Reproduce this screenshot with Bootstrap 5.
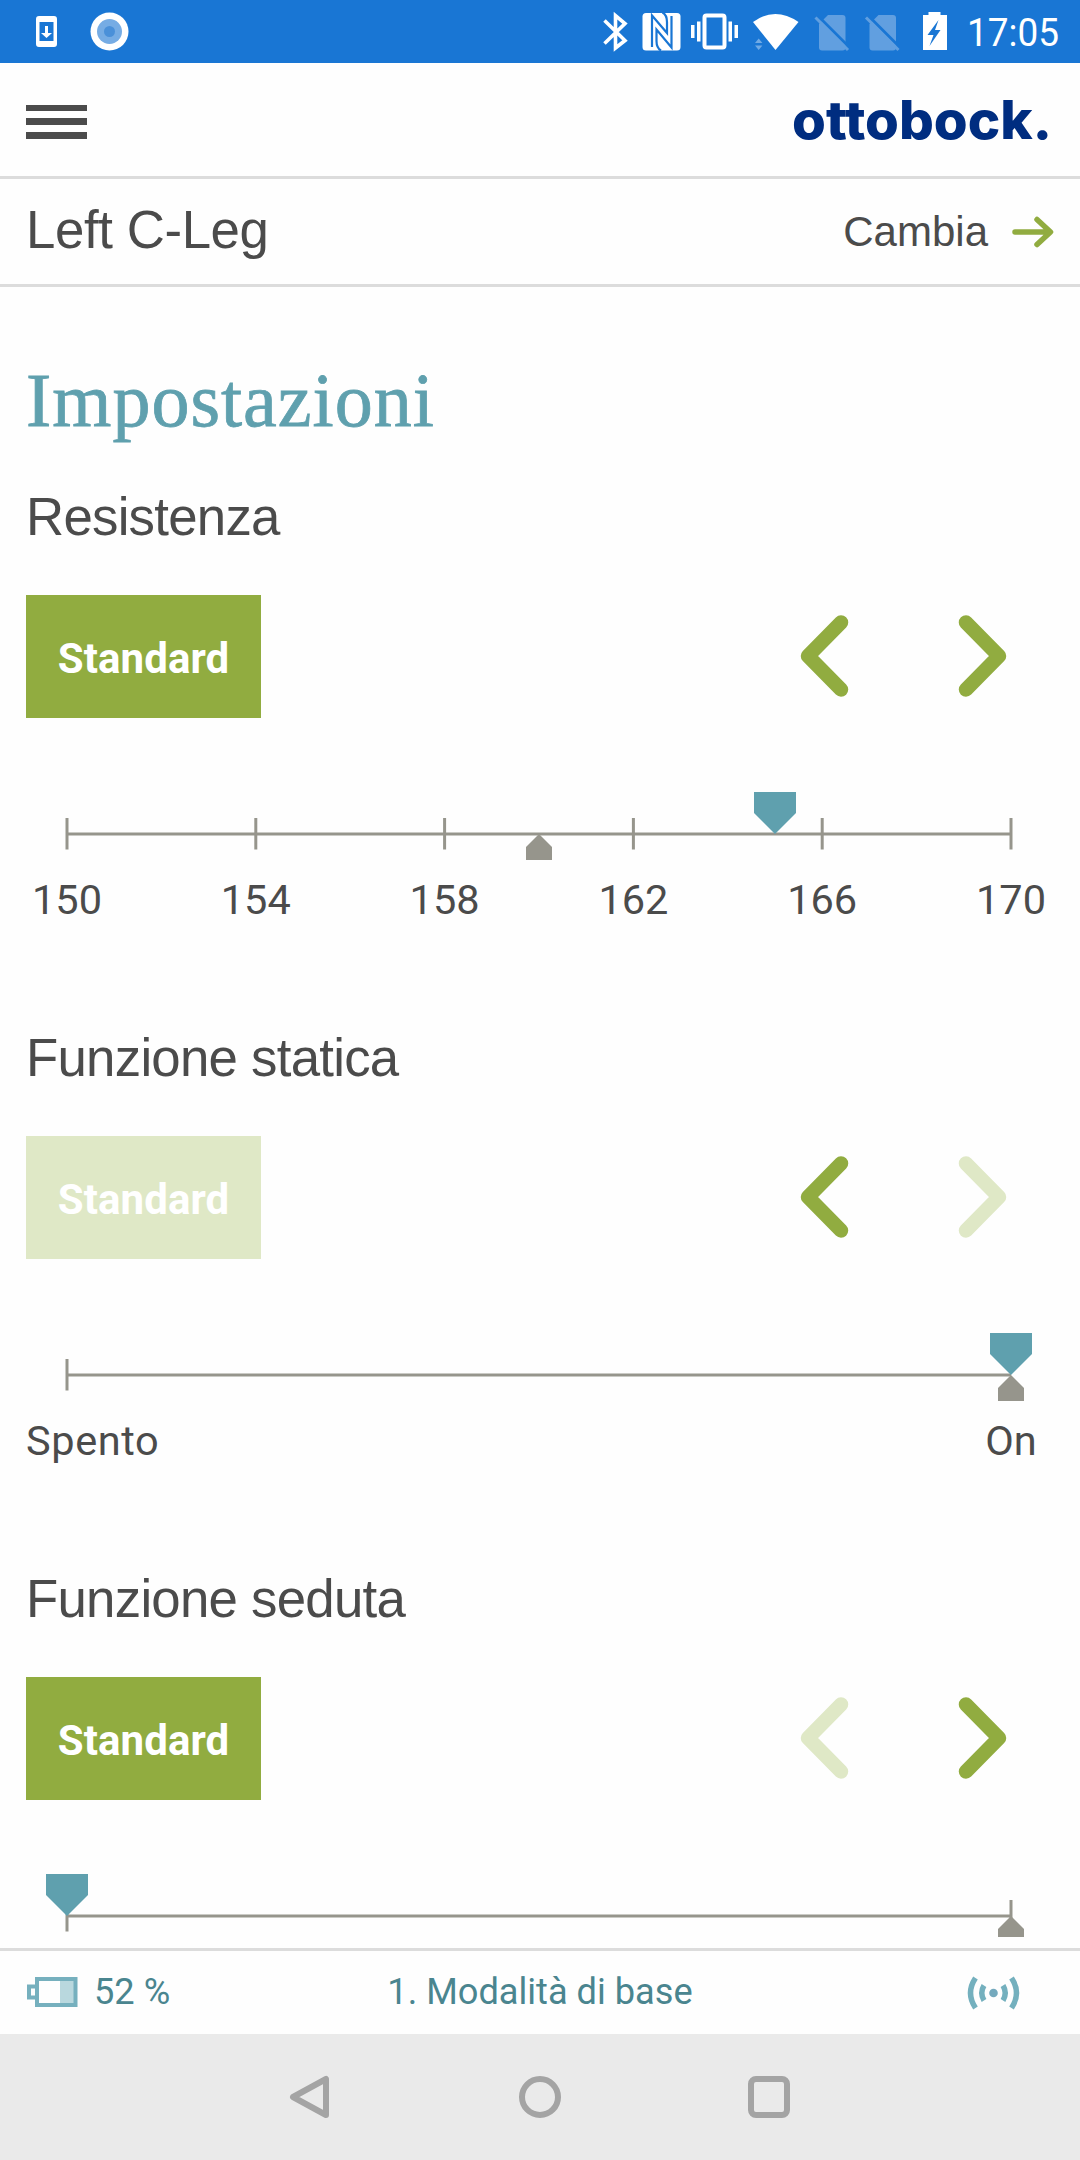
<!DOCTYPE html>
<html lang="it">
<head>
<meta charset="utf-8">
<meta name="viewport" content="width=device-width, initial-scale=1">
<title>Impostazioni</title>
<link href="https://cdn.jsdelivr.net/npm/bootstrap@5.3.0/dist/css/bootstrap.min.css" rel="stylesheet">
<style>
body{height:2160px;width:1080px;overflow:hidden;background:#fefefe;color:#4b4b4b;font-family:Roboto,sans-serif;font-size:42px;line-height:1}
svg{display:block;flex:none}
.statusbar{height:63px;background:#1976d4;color:#fff;font-size:38px}
.topbar{height:116px;border-bottom:3px solid #dcdcdc;padding-left:26px;padding-right:26px}
.burger{width:61px;height:34px;background:none;border:0;padding:0}
.burger span{display:block;height:6.6px;background:#4b4b4b}
.devicebar{height:108px;border-bottom:3px solid #dcdcdc;padding:0 26px;font-family:"Liberation Sans",sans-serif}
.device-name,.setting-title{font-family:"Liberation Sans",sans-serif;font-size:52.8px;line-height:60px;font-weight:400;letter-spacing:-.75px}
.device-name{letter-spacing:-.4px;padding-bottom:4px}
.change-link{color:#4b4b4b;font-size:42px}
.content{height:1650px;overflow:hidden}
.page-title{font-family:"Liberation Serif",serif;font-size:76px;line-height:88px;height:200px;color:#5fa0ae;padding:69px 26px 0;letter-spacing:1px;font-weight:400;-webkit-text-stroke:.8px #5fa0ae}
.setting{height:541px}
.setting-title{height:60px;padding:0 26px}
.control-row{padding:0 73px 0 26px;height:123px;margin-top:48px}
.btn-std{width:235px;height:123px;border-radius:0;border:0;background:#91ac40;color:#fff;font-size:42px;font-weight:700;padding:4px 0 0;letter-spacing:.1px}
.btn-std:disabled{background:#dfe8c6;color:#fff;opacity:1}
.arrows{gap:109px;padding-bottom:2px}
.arrow-btn{background:none;border:0;padding:0;color:#91ac40}
.arrow-btn:disabled{color:#dfe8c6}
.track{margin-top:71px}
.labels{padding:0 21px 0 19px;height:50px;margin-top:12px;line-height:50px;font-size:41.5px}
.labels span{width:96px;text-align:center}
.labels.ends{padding:0 21px 0 26px}
.low-label{letter-spacing:.6px}
.footer-bar{height:86px;border-top:3px solid #dcdcdc;margin-top:11px;color:#4a858f;font-size:36.2px;padding:0 60px 0 26px}
.battery-box{width:200px}
.signal-box{width:166px}
.sysnav{height:126px;background:#eaeaea}
</style>
</head>
<body class="d-flex flex-column">
<header class="statusbar flex-shrink-0">
<svg width="1080" height="63" viewBox="0 0 1080 63" fill="#fff">
<path fill-rule="evenodd" d="M39 16h15q3 0 3 3v25q0 3-3 3H39q-3 0-3-3V19q0-3 3-3zM39.500 22v19h14V22z"/>
<path d="M45 26h3v7h4l-5.500 5-5.500-5h4z"/>
<circle cx="109.500" cy="31.500" r="19"/><circle cx="109.500" cy="31.500" r="12.500" fill="#76ace4"/><circle cx="109.500" cy="31.500" r="5.500" fill="#4a90d9"/>
<path d="M604.500 20.500l20.500 20-9.500 7.500V15.500l9.500 8-20.500 20" fill="none" stroke="#fff" stroke-width="3.600"/>
<rect x="642.500" y="13" width="38" height="37.500" rx="3.500"/>
<path d="M652 47V15.500L667 33V22q0-7-4.500-9.500M671.500 16v31.500L656.500 29.500V41q0 7 4.500 9.500" fill="none" stroke="#1976d4" stroke-width="2.200"/>
<rect x="704.500" y="15.500" width="20" height="32" rx="2" fill="none" stroke="#fff" stroke-width="4"/>
<path d="M691 25h3.500v13H691zM697 21.500h3.500v20H697zM728.500 21.500h3.500v20h-3.500zM734.500 25h3.500v13h-3.500z"/>
<path d="M753 22Q775 6 798.500 22L775.500 50z"/>
<path d="M755 43l3.700-4.500 3.700 4.500zM755 45.500h7.400l-3.700 4.500z" fill="#70aae5"/>
<g id="nosim"><path d="M828 15h14.500q3 0 3 3v29.500q0 3-3 3H822q-3 0-3-3V24z" fill="#619fe0"/><path d="M818 16l32 32" stroke="#1976d4" stroke-width="3"/><path d="M815.500 17.500l32.500 32.500" stroke="#619fe0" stroke-width="3"/></g>
<use href="#nosim" x="50.500"/>
<path fill-rule="evenodd" d="M923 15h5.500v-3h12v3H947v35h-24zM938.500 20l-11 15h6L929.500 46l11-16h-5.500z"/>
<text x="967" y="46" font-size="38" font-family="Roboto" textLength="92" lengthAdjust="spacingAndGlyphs">17:05</text>
</svg>
</header>
<nav class="topbar d-flex align-items-center justify-content-between flex-shrink-0">
<button class="burger d-flex flex-column justify-content-between mt-1" aria-label="Menu"><span></span><span></span><span></span></button>
<svg width="264" height="66" viewBox="0 0 264 66" class="mt-1" role="img"><text x="2" y="50" font-family="Inter" font-weight="800" font-size="53" fill="#002d80" textLength="260" lengthAdjust="spacingAndGlyphs">ottobock.</text></svg>
</nav>
<section class="devicebar d-flex align-items-center justify-content-between flex-shrink-0">
<span class="device-name">Left C-Leg</span>
<a class="change-link text-decoration-none d-flex align-items-center" href="#">Cambia
<svg class="ms-4" width="42" height="32" viewBox="0 0 42 32" fill="none" stroke="#91ac40" stroke-width="5.500" stroke-linecap="round" stroke-linejoin="round"><path d="M3 16h34M25 3.500L38.500 16 25 28.500"/></svg></a>
</section>
<main class="content flex-shrink-0">
<h1 class="page-title mb-0">Impostazioni</h1>
<section class="setting">
<h2 class="setting-title mb-0">Resistenza</h2>
<div class="control-row d-flex align-items-center justify-content-between">
<button class="btn btn-std">Standard</button>
<div class="arrows d-flex">
<button class="arrow-btn" aria-label="Meno"><svg width="49" height="82" viewBox="0 0 49 82" fill="none" stroke="currentColor" stroke-width="14.500" stroke-linecap="round" stroke-linejoin="round"><path d="M41 7.500L8 41l33 33.500"/></svg></button>
<button class="arrow-btn" aria-label="Più"><svg width="49" height="82" viewBox="0 0 49 82" fill="none" stroke="currentColor" stroke-width="14.500" stroke-linecap="round" stroke-linejoin="round"><path d="M8 7.500L41 41 8 74.500"/></svg></button>
</div></div>
<svg class="track" width="1080" height="74" viewBox="0 0 1080 74"><path d="M67 45h944M67 29v31.500M255.800 29v31.500M444.600 29v31.500M633.400 29v31.500M822.200 29v31.500M1011 29v31.500" stroke="#96958c" stroke-width="3"/><path d="M754 3h42v21l-21 21-21-21z" fill="#5fa0ae"/><path d="M539 45l13 13v13h-26V58z" fill="#96958c"/></svg>
<div class="labels d-flex justify-content-between"><span>150</span><span>154</span><span>158</span><span>162</span><span>166</span><span>170</span></div>
</section>
<section class="setting">
<h2 class="setting-title mb-0">Funzione statica</h2>
<div class="control-row d-flex align-items-center justify-content-between">
<button class="btn btn-std" disabled>Standard</button>
<div class="arrows d-flex">
<button class="arrow-btn" aria-label="Meno"><svg width="49" height="82" viewBox="0 0 49 82" fill="none" stroke="currentColor" stroke-width="14.500" stroke-linecap="round" stroke-linejoin="round"><path d="M41 7.500L8 41l33 33.500"/></svg></button>
<button class="arrow-btn" aria-label="Più" disabled><svg width="49" height="82" viewBox="0 0 49 82" fill="none" stroke="currentColor" stroke-width="14.500" stroke-linecap="round" stroke-linejoin="round"><path d="M8 7.500L41 41 8 74.500"/></svg></button>
</div></div>
<svg class="track" width="1080" height="74" viewBox="0 0 1080 74"><path d="M67 45h944M67 29v31.500" stroke="#96958c" stroke-width="3"/><path d="M990 3h42v21l-21 21-21-21z" fill="#5fa0ae"/><path d="M1011 45l13 13v13h-26V58z" fill="#96958c"/></svg>
<div class="labels ends d-flex justify-content-between"><div class="low-label">Spento</div><span>On</span></div>
</section>
<section class="setting">
<h2 class="setting-title mb-0">Funzione seduta</h2>
<div class="control-row d-flex align-items-center justify-content-between">
<button class="btn btn-std">Standard</button>
<div class="arrows d-flex">
<button class="arrow-btn" aria-label="Meno" disabled><svg width="49" height="82" viewBox="0 0 49 82" fill="none" stroke="currentColor" stroke-width="14.500" stroke-linecap="round" stroke-linejoin="round"><path d="M41 7.500L8 41l33 33.500"/></svg></button>
<button class="arrow-btn" aria-label="Più"><svg width="49" height="82" viewBox="0 0 49 82" fill="none" stroke="currentColor" stroke-width="14.500" stroke-linecap="round" stroke-linejoin="round"><path d="M8 7.500L41 41 8 74.500"/></svg></button>
</div></div>
<svg class="track" width="1080" height="74" viewBox="0 0 1080 74"><path d="M67 45h944M67 29v31.500M1011 29v31.500" stroke="#96958c" stroke-width="3"/><path d="M46 3h42v21L67 45 46 24z" fill="#5fa0ae"/><path d="M1011 45l13 13v13h-26V58z" fill="#96958c"/></svg>
</section>
</main>
<footer class="footer-bar d-flex align-items-center justify-content-between flex-shrink-0">
<div class="battery-box d-flex align-items-center"><svg width="52" height="30" viewBox="0 0 52 30"><path d="M34 4h14v22H34z" fill="#b9d8de"/><path d="M11 2h38.500v26H11zM11 9.500H3v11h8" fill="none" stroke="#76b0be" stroke-width="4"/></svg><span class="ms-3">52 %</span></div>
<span class="mode-name">1. Modalità di base</span>
<div class="signal-box d-flex justify-content-end"><svg width="53" height="34" viewBox="0 0 53 34" fill="none" stroke="#74b0be" stroke-width="5.500"><circle cx="26.500" cy="17" r="4.300" fill="#74a9bd" stroke="none"/><path d="M8.500 2Q-1.500 17 8.500 32M44.500 2q10 15 0 30M17 9.500q-4.500 7.500 0 15M36 9.500q4.500 7.500 0 15"/></svg></div>
</footer>
<nav class="sysnav flex-shrink-0">
<svg width="1080" height="126" viewBox="0 0 1080 126" fill="none" stroke="#a4a4a4" stroke-width="6" stroke-linejoin="round"><path d="M326 45v36L293 63z"/><circle cx="540" cy="63" r="18"/><rect x="751" y="45" width="36" height="36" rx="5"/></svg>
</nav>
<script src="https://cdn.jsdelivr.net/npm/bootstrap@5.3.0/dist/js/bootstrap.bundle.min.js"></script>
</body>
</html>
